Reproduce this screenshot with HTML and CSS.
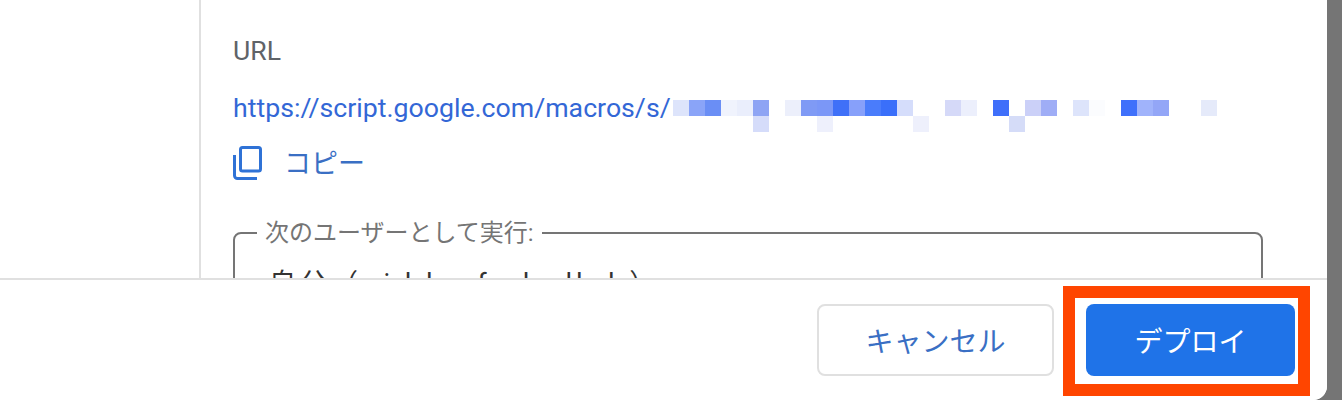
FILE: index.html
```html
<!DOCTYPE html>
<html lang="ja">
<head>
    <meta charset="UTF-8">
    <title>デプロイ</title>
    <link rel="stylesheet" href="styles.css">
</head>
<body>
    <div class="dialog">
        <div class="main">
            <div class="sidebar"></div>
            <div class="content">
                <div class="url-label">URL</div>
                <div class="url-row">
                    <a class="url-link">https://script.google.com/macros/s/</a>
                    <!-- mosaic over the deployment id -->
                    <svg class="mosaic" width="544" height="32" viewBox="0 0 34 2" preserveAspectRatio="none" shape-rendering="crispEdges">
                        <rect x="0" y="0" width="1" height="1" fill="#dde4fb"/>
                        <rect x="1" y="0" width="1" height="1" fill="#8aa4f8"/>
                        <rect x="2" y="0" width="1" height="1" fill="#6a8ef5"/>
                        <rect x="3" y="0" width="1" height="1" fill="#f0f3fd"/>
                        <rect x="4" y="0" width="1" height="1" fill="#eaeefc"/>
                        <rect x="5" y="0" width="1" height="1" fill="#8ea4f4"/>
                        <rect x="5" y="1" width="1" height="1" fill="#d5dcfa"/>
                        <rect x="7" y="0" width="1" height="1" fill="#eceffb"/>
                        <rect x="8" y="0" width="1" height="1" fill="#7f9af5"/>
                        <rect x="9" y="0" width="1" height="1" fill="#7b97f7"/>
                        <rect x="9" y="1" width="1" height="1" fill="#eef0fc"/>
                        <rect x="10" y="0" width="1" height="1" fill="#3f70f8"/>
                        <rect x="11" y="0" width="1" height="1" fill="#87a0fa"/>
                        <rect x="12" y="0" width="1" height="1" fill="#4a7cfb"/>
                        <rect x="13" y="0" width="1" height="1" fill="#3a6ffa"/>
                        <rect x="14" y="0" width="1" height="1" fill="#d5ddfb"/>
                        <rect x="15" y="1" width="1" height="1" fill="#eef0fc"/>
                        <rect x="17" y="0" width="1" height="1" fill="#d5d9f8"/>
                        <rect x="18" y="0" width="1" height="1" fill="#eceffc"/>
                        <rect x="20" y="0" width="1" height="1" fill="#3f6ffa"/>
                        <rect x="21" y="1" width="1" height="1" fill="#d5dcf8"/>
                        <rect x="22" y="0" width="1" height="1" fill="#cbd0f8"/>
                        <rect x="23" y="0" width="1" height="1" fill="#9fadf6"/>
                        <rect x="25" y="0" width="1" height="1" fill="#dde4fb"/>
                        <rect x="26" y="0" width="1" height="1" fill="#fbfcfe"/>
                        <rect x="28" y="0" width="1" height="1" fill="#3f70fb"/>
                        <rect x="29" y="0" width="1" height="1" fill="#a0b3fb"/>
                        <rect x="30" y="0" width="1" height="1" fill="#93a6f7"/>
                        <rect x="33" y="0" width="1" height="1" fill="#e5eafa"/>
                    </svg>
                </div>
                <div class="copy-row">
                    <svg class="copy-icon" width="29" height="34" viewBox="0 0 29 34" fill="none" stroke="#2f72d6" stroke-width="3">
                        <rect x="7.500" y="1.500" width="20" height="23.500" rx="2"/>
                        <path d="M1.500 9v20.500a3 3 0 0 0 3 3h19.500"/>
                    </svg>
                    <span class="copy-text">コピー</span>
                </div>
                <fieldset class="field">
                    <legend class="field-legend">次のユーザーとして実行:</legend>
                    <div class="field-value">自分（  i l l o f   l   ll  l ）</div>
                </fieldset>
            </div>
        </div>
        <div class="footer">
            <button class="btn btn-cancel">キャンセル</button>
            <div class="highlight">
                <button class="btn btn-deploy">デプロイ</button>
            </div>
        </div>
    </div>
</body>
</html>
```

FILE: styles.css
```css
html, body {
    margin: 0;
    height: 100%;
}
body {
    background-color: #757575;
    overflow: hidden;
    font-family: Roboto, "Noto Sans CJK JP", sans-serif;
}
.dialog {
    width: 1327px;
    height: 400px;
    background-color: white;
    border-bottom-right-radius: 14px;
    display: flex;
    flex-direction: column;
    overflow: hidden;
}
.main {
    height: 278px;
    display: flex;
    overflow: hidden;
}
.sidebar {
    width: 199px;
    flex-shrink: 0;
    border-right: 2px solid #e0e0e0;
}
.content {
    width: 1030px;
    padding: 35px 0 0 32px;
}
.url-label {
    font-size: 26.6px;
    line-height: 32px;
    color: #5f6368;
}
.url-row {
    display: flex;
    margin-top: 25px;
    height: 32px;
}
.url-link {
    font-size: 26.7px;
    line-height: 32px;
    color: #3367d6;
    white-space: nowrap;
}
.mosaic {
    flex-shrink: 0;
    margin: 8px 0 0 2px;
}
.copy-row {
    display: flex;
    align-items: center;
    margin-top: 21px;
    height: 36px;
}
.copy-text {
    font-size: 27px;
    color: #3a6fc4;
    margin: 0 0 4px 22px;
}
.field {
    margin: 38px 0 0;
    padding: 15px 30px 0;
    border: 2px solid #757575;
    border-radius: 8px;
    min-width: 0;
    height: 100px;
    box-sizing: border-box;
}
.field-legend {
    font-size: 24px;
    line-height: 28px;
    color: #757575;
    padding: 0 8px;
    margin-left: -8px;
}
.field-value {
    font-size: 27px;
    color: #333333;
    margin-left: 4px;
    letter-spacing: 4px;
    white-space: pre;
}
.footer {
    flex: 1;
    border-top: 2px solid #e0e0e0;
    display: flex;
    justify-content: flex-end;
    align-items: flex-start;
    padding: 6px 17px 0 0;
    background-color: white;
}
.btn {
    font-family: Roboto, "Noto Sans CJK JP", sans-serif;
    font-size: 28px;
    width: 237px;
    height: 72px;
    border-radius: 8px;
    padding: 0;
}
.btn-cancel {
    background-color: white;
    color: #3a6fc4;
    border: 2px solid #e0e0e0;
    margin: 18px 9px 0 0;
}
.highlight {
    border: 12px solid #ff4500;
    padding: 6px 3px 8px 11px;
    line-height: 0;
}
.btn-deploy {
    width: 209px;
    background-color: #1f73e8;
    color: white;
    border: none;
}
```
